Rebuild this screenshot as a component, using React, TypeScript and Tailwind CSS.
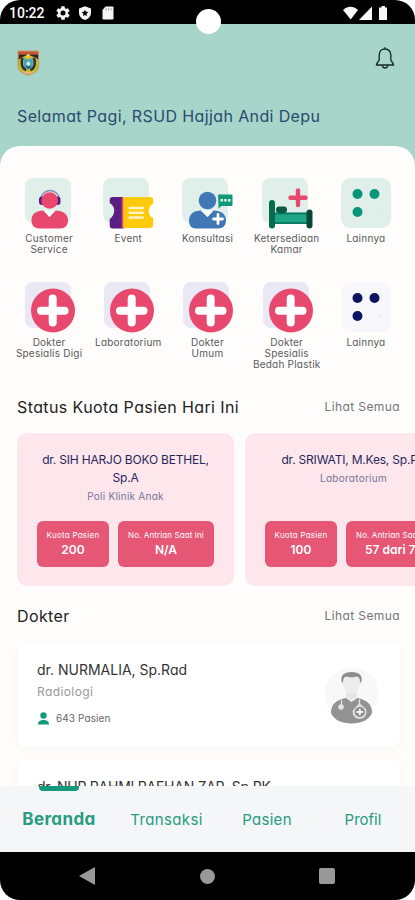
import React from 'react';

interface MenuItem {
    label: string[];
    icon: React.ReactNode;
}

interface Quota {
    name: string[];
    clinic: string;
    quota: string;
    queue: string;
}

const CustomerIcon = () => (
    <svg width="50" height="50" viewBox="0 0 50 50">
        <rect x="1" y="0" width="46" height="45" rx="8" fill="#e1efeb" />
        <path d="M16.500 22a9.500 9.500 0 0 1 19 0" fill="none" stroke="#8a86b5" strokeWidth="1.300" />
        <rect x="15" y="18.500" width="6" height="8.500" rx="3" fill="#5b1f83" />
        <rect x="30.500" y="18.500" width="6" height="8.500" rx="3" fill="#5b1f83" />
        <circle cx="25.700" cy="22.500" r="8.300" fill="#e8486d" />
        <path d="M7.500 42.500C7.500 36 12 32.500 19.500 32.500L25.500 39 31.500 32.500C39 32.500 44 36 44 42.500C44 47.500 41 50.500 36 50.500H15.500C10.500 50.500 7.500 47.500 7.500 42.500Z" fill="#e8486d" />
        <path d="M19.500 32.500h12L25.500 39z" fill="#fdfefe" />
    </svg>
);

const EventIcon = () => (
    <svg width="50" height="50" viewBox="0 0 50 50">
        <rect x="0" y="0" width="46" height="45" rx="8" fill="#e1efeb" />
        <g transform="translate(.7 0)">
            <path d="M20 19h-11c-2 0-3 1-3 3v3c3 1.500 4.500 4.500 4.500 7.500S9 39 6 41v6.500c0 2 1 3 3 3h11z" fill="#5b1f83" />
            <path d="M19 19h27c2 0 3.500 1 3.500 3v4c-3 1-4.500 4-4.500 7s1.500 6 4.500 7v7c0 2-1.500 3-3.500 3H19z" fill="#fecb0c" />
            <path d="M18 20l1.500-1V50.500L18 49z" fill="#e8486d" />
            <path d="M25 30h15M25 34.700h15M25 39.500h15" stroke="#fff3c4" strokeWidth="2.400" />
        </g>
    </svg>
);

const ConsultIcon = () => (
    <svg width="50" height="50" viewBox="0 0 50 50">
        <rect x="0" y="0" width="46" height="45" rx="8" fill="#e1efeb" />
        <circle cx="25.500" cy="22.500" r="8.800" fill="#3f78b5" />
        <path d="M7 43c0-6.500 4.500-10.500 12-10.500L25.500 39 31.500 32.500C39 32.500 44 36 44 42.500c0 5-3 8-8 8H14c-4.500 0-7-3-7-7.500z" fill="#3f78b5" />
        <path d="M19 32.500h12.500L25.500 39z" fill="#f5fbfb" />
        <path d="M36 16.500h13.500q1 0 1 1V27q0 1-1 1H39.500L36.500 30.500V28z" fill="#10987a" />
        <path d="M38.500 22.300h2.500M42.200 22.300h2.500M46 22.300h2.500" stroke="#e7f7f2" strokeWidth="2.400" />
        <path d="M36 36.500v9M31.500 41h9" stroke="#fff" strokeWidth="2.800" strokeLinecap="round" />
    </svg>
);

const BedIcon = () => (
    <svg width="50" height="50" viewBox="0 0 50 50">
        <rect x="0" y="0" width="46" height="45" rx="8" fill="#e1efeb" />
        <path d="M36 12.500v14.500M28.500 19.700h15" stroke="#e8486d" strokeWidth="4.400" strokeLinecap="round" />
        <rect x="12" y="34.500" width="33" height="11.500" fill="#1ca586" />
        <path d="M12 35.500h33M12 45h33" stroke="#087258" strokeWidth="1.500" />
        <rect x="14" y="28.500" width="11" height="6.500" rx="3" fill="#0a5b47" />
        <rect x="7" y="22" width="6" height="28.500" rx="3" fill="#086b50" />
        <rect x="44.500" y="31.500" width="6" height="19" rx="3" fill="#084837" />
    </svg>
);

const MoreIcon = ({ bg, dot }: { bg: string; dot: string }) => (
    <svg width="50" height="50" viewBox="0 0 50 50">
        <rect width="50" height="50" rx="9" fill={bg} />
        <circle cx="16.500" cy="16" r="5" fill={dot} />
        <circle cx="33.500" cy="16" r="5" fill={dot} />
        <circle cx="16.500" cy="34" r="5" fill={dot} />
        <path d="M28.500 34h1M38.500 32.500v3" stroke="#d7e2df" strokeWidth="0.800" />
    </svg>
);

const ClinicIcon = () => (
    <svg width="50" height="50" viewBox="0 0 50 50">
        <rect x="1" y="0" width="46" height="46" rx="8" fill="#eae8f5" />
        <circle cx="29" cy="28.500" r="22" fill="#e8486d" />
        <path d="M28.700 16.500v24M17 28.700h23.500" stroke="#fff" strokeWidth="8" strokeLinecap="round" />
    </svg>
);

const Crest = () => (
    <svg width="23" height="26" viewBox="0 0 24 27">
        <path d="M1 1h21.500v16c0 5-5 7.500-10.700 9.500C6 24.500 1 22 1 17z" fill="#c9b82f" stroke="#b98a68" strokeWidth="0.800" />
        <path d="M1.500 1.500h20.500v3H1.500z" fill="#c9503f" />
        <path d="M1.800 4.500H22v5L18 7H6l-4.200 3z" fill="#33202a" />
        <circle cx="11.700" cy="13.500" r="8" fill="#cdb935" />
        <path d="M6 8c-2.500 5-1 11 3.500 13M17.500 8c2.500 5 1 11-3.500 13" fill="none" stroke="#26353c" strokeWidth="2.600" />
        <path d="M7 8.500l3.500 1.200h2.500l3.500-1.200v8l-4.700 4-4.800-4z" fill="#4ba3bd" />
        <path d="M9.500 14.500l2.500-3 2 3-2 2.500z" fill="#dceaf0" />
        <path d="M8 17h7.500l-3.500 3z" fill="#285d89" />
        <circle cx="11.700" cy="5.800" r="1.800" fill="#f1d84c" />
        <path d="M5 21.500c4 2 9 2 13.500 0l-2 2.500c-3 1-6.500 1-9.500 0z" fill="#edb08c" />
    </svg>
);

const Avatar = () => (
    <svg width="56" height="58" viewBox="0 0 56 58">
        <circle cx="27.500" cy="28" r="27" fill="#f8f8f8" />
        <path d="M22 26h11v9l-5.500 6-5.500-6z" fill="#e3e3e3" />
        <path d="M7 47c0-9 5-13 15-15l5.500 3.500L33 32c10 2 15 6 15 15-3 7-11 10.500-20.500 10.500S10 54 7 47z" fill="#929292" />
        <path d="M23 31.500l4.500 3.500 5-3.500" fill="none" stroke="#f7f7f7" strokeWidth="1.500" />
        <path d="M18.300 18c-3-8 1-12 9.200-12s12.200 4 9.200 12z" fill="#8d8d8d" />
        <path d="M19 16c0-3 1-5 3-5.500 3 1 8 1 11 0 2 .5 3 2.500 3 5.500 1.500 0 1.500 3-.5 4-1 5-4.500 8.500-8 8.500S20.500 25 19.500 20c-2-1-2-4-.5-4z" fill="#ececec" />
        <path d="M17.500 34v5" stroke="#e8e8e8" strokeWidth="1.200" />
        <circle cx="17" cy="41" r="2.800" fill="#e4e4e4" />
        <path d="M35.500 33.500v6.500" stroke="#e8e8e8" strokeWidth="1.300" />
        <path d="M35.500 37l6.500 6c2 6-2 10-6.500 10s-8-4-6.500-9z" fill="#dedede" />
        <circle cx="35.800" cy="46" r="5" fill="#8b8b8b" />
        <path d="M35.800 42.700v6.600M32.500 46h6.600" stroke="#f3f3f3" strokeWidth="2" />
    </svg>
);

const services: MenuItem[] = [
    { label: ['Customer', 'Service'], icon: <CustomerIcon /> },
    { label: ['Event'], icon: <EventIcon /> },
    { label: ['Konsultasi'], icon: <ConsultIcon /> },
    { label: ['Ketersediaan', 'Kamar'], icon: <BedIcon /> },
    { label: ['Lainnya'], icon: <MoreIcon bg="#e1efeb" dot="#07967a" /> },
];

const clinics: MenuItem[] = [
    { label: ['Dokter', 'Spesialis Digi'], icon: <ClinicIcon /> },
    { label: ['Laboratorium'], icon: <ClinicIcon /> },
    { label: ['Dokter', 'Umum'], icon: <ClinicIcon /> },
    { label: ['Dokter', 'Spesialis', 'Bedah Plastik'], icon: <ClinicIcon /> },
    { label: ['Lainnya'], icon: <MoreIcon bg="#f8f7fc" dot="#0c1560" /> },
];

const quotas: Quota[] = [
    { name: ['dr. SIH HARJO BOKO BETHEL,', 'Sp.A'], clinic: 'Poli Klinik Anak', quota: '200', queue: 'N/A' },
    { name: ['dr. SRIWATI, M.Kes, Sp.PK'], clinic: 'Laboratorium', quota: '100', queue: '57 dari 75' },
];

const MenuRow = ({ items }: { items: MenuItem[] }) => (
    <div className="grid shrink-0 grid-cols-5 px-[9.5px]">
        {items.map((item, i) => (
            <div key={i} className="flex flex-col items-center">
                <div className="h-[50px] w-[50px] [&>svg]:overflow-visible">{item.icon}</div>
                <div className="mt-[5px] text-center text-[10px] leading-[11px] tracking-[0.22px] whitespace-nowrap text-[#5a5a5a]">
                    {item.label.map((line) => <div key={line}>{line}</div>)}
                </div>
            </div>
        ))}
    </div>
);

const SectionTitle = ({ title }: { title: string }) => (
    <div className="flex h-6 items-center justify-between pr-[15px] pl-[17px]">
        <h2 className="text-base tracking-[0.4px] text-[#222]">{title}</h2>
        <span className="text-xs tracking-[0.4px] text-[#757575]">Lihat Semua</span>
    </div>
);

const QuotaCard = ({ data }: { data: Quota }) => (
    <div className="flex h-[153px] w-[217px] shrink-0 flex-col rounded-[10px] bg-[#fde6ec] px-5 pt-[18px] pb-[19px] text-center whitespace-nowrap">
        <div className="text-[12px] leading-[18px] tracking-[-0.2px] text-[#27265c]">
            {data.name.map((line) => <div key={line}>{line}</div>)}
        </div>
        <div className="text-[10px] leading-[19px] tracking-[0.25px] text-[#77759a]">{data.clinic}</div>
        <div className="mt-auto flex h-[46px] gap-[9px] text-white">
            <div className="flex w-[72px] flex-col items-center rounded-md bg-[#e65675] pt-[8px]">
                <span className="text-[8px] leading-[12px] tracking-[0.25px]">Kuota Pasien</span>
                <span className="text-[12px] leading-[18px] font-semibold">{data.quota}</span>
            </div>
            <div className="flex w-24 flex-col items-center rounded-md bg-[#e65675] pt-[8px]">
                <span className="text-[8px] leading-[12px] tracking-[0.1px]">No. Antrian Saat Ini</span>
                <span className="text-[12px] leading-[18px] font-semibold">{data.queue}</span>
            </div>
        </div>
    </div>
);

const StatusBar = () => (
    <div className="relative flex h-6 shrink-0 items-center bg-black pt-[2px] pr-[27px] pl-[9px] text-white">
        <span className="w-[47px] font-[Roboto,sans-serif] text-[14px] font-medium">10:22</span>
        <svg width="14" height="14" viewBox="2 2 20 20" fill="#f4f4f4">
            <path d="M19.140 12.940c.04-.3.060-.610.060-.940s-.020-.640-.070-.940l2.030-1.580c.180-.140.230-.410.120-.610l-1.920-3.320c-.120-.220-.370-.290-.590-.220l-2.390.960c-.5-.380-1.030-.7-1.620-.940L14.400 2.810A.49.49 0 0 0 13.920 2.400h-3.840c-.240 0-.430.170-.470.410L9.250 5.350c-.590.240-1.130.570-1.620.940l-2.390-.960c-.220-.080-.470 0-.590.220L2.740 8.870c-.120.210-.080.470.120.610l2.030 1.580c-.050.3-.090.630-.090.940s.020.640.070.940l-2.030 1.580c-.180.140-.230.410-.120.610l1.920 3.320c.120.220.370.290.590.220l2.390-.960c.5.380 1.030.7 1.620.940l.360 2.540c.050.240.240.410.480.410h3.840c.240 0 .440-.170.470-.410l.360-2.540c.590-.240 1.130-.560 1.620-.940l2.390.960c.220.080.470 0 .590-.220l1.920-3.320c.120-.220.070-.470-.120-.610zM12 15.600A3.600 3.600 0 1 1 12 8.400a3.600 3.600 0 0 1 0 7.200z" />
        </svg>
        <svg className="ml-2" width="14" height="14" viewBox="0 0 14 14">
            <path d="M7 .2l6 2.300v4.200c0 3.500-2.500 6.200-6 7.200-3.500-1-6-3.700-6-7.200V2.500z" fill="#f4f4f4" />
            <path d="M7 3.700l1 2.100 2.300.3-1.700 1.600.4 2.300-2-1.100L5 10l.4-2.300-1.700-1.600 2.300-.3z" fill="#000" />
        </svg>
        <svg className="ml-[9px]" width="13" height="14" viewBox="0 0 13 14">
            <path d="M4.500.5h7q1 0 1 1v11q0 1-1 1h-9q-1 0-1-1V4z" fill="#f4f4f4" />
            <path d="M5 2v2.500M7.500 2v2.500M10 2v2.500" stroke="#999" strokeWidth="0.800" />
        </svg>
        <svg className="ml-auto" width="45" height="15" viewBox="0 0 45 15" fill="#f8f8f8">
            <path d="M0 4C5-.2 10-.2 15 4L7.700 13.500z" />
            <path d="M29 .5V14H16z" />
            <path d="M37 1.500h1.500V0H42v1.500h2V14h-8V1.500z" />
        </svg>
        <div className="absolute top-[9px] left-[196px] h-[25px] w-[25px] rounded-full bg-white" />
    </div>
);

const App = () => (
    <div className="flex h-[900px] w-[415px] flex-col overflow-hidden rounded-[20px] bg-[#fefdfc] font-[Inter,sans-serif] [font-feature-settings:'cv11']">
        <StatusBar />

        <header className="h-[142px] shrink-0 bg-[#a8d5c9]">
            <div className="flex justify-between pt-[22px] pr-5 pl-[17px]">
                <div className="pt-1"><Crest /></div>
                <svg width="20" height="25" viewBox="0 0 20 25" fill="none" stroke="#152d2b" strokeWidth="1.400">
                    <path d="M10 3c-3.800 0-5.800 2.800-5.800 6v4.500c0 2-2.700 3-2.700 5.500h17c0-2.500-2.700-3.500-2.700-5.500V9c0-3.200-2-6-5.800-6zM10 1.300v1.700M7.300 19.500c.2 3.300 5.200 3.300 5.400 0" />
                </svg>
            </div>
            <p className="mt-[28px] pl-[17px] text-base leading-6 tracking-[0.38px] whitespace-nowrap text-[#284a70]">Selamat Pagi, RSUD Hajjah Andi Depu</p>
        </header>

        <main className="relative -mt-5 flex min-h-0 flex-1 flex-col overflow-hidden rounded-t-[20px] bg-[#fefdfc] pt-8">
            <div className="flex h-[217px] shrink-0 flex-col gap-[27px]">
                <MenuRow items={services} />
                <MenuRow items={clinics} />
            </div>
            <div className="shrink-0"><SectionTitle title="Status Kuota Pasien Hari Ini" /></div>
            <div className="mt-[14px] flex shrink-0 gap-[11px] overflow-hidden pl-[17px]">
                {quotas.map((q) => <QuotaCard key={q.quota} data={q} />)}
            </div>
            <div className="mt-[18px] shrink-0"><SectionTitle title="Dokter" /></div>
            <div className="mt-[15px] flex shrink-0 flex-col gap-[13px] pr-[15px] pl-[17px]">
                <div className="flex h-[104px] items-center justify-between rounded-lg bg-white px-5 shadow-[0_2px_10px_rgba(0,0,0,0.03)]">
                    <div className="pb-1">
                        <div className="text-[14px] leading-5 text-[#333]">dr. NURMALIA, Sp.Rad</div>
                        <div className="mt-[2px] text-[12px] leading-5 tracking-[0.4px] text-[#999]">Radiologi</div>
                        <div className="mt-[8px] flex items-center gap-[6px] text-[10px] leading-4 tracking-[0.1px] text-[#666]">
                            <svg width="13" height="13" viewBox="0 0 13 13" fill="#149a7b">
                                <circle cx="6.500" cy="3.500" r="3.200" />
                                <path d="M1 12.500c0-3.500 2.500-4.500 5.500-4.500s5.500 1 5.500 4.500z" />
                            </svg>
                            <span>643 Pasien</span>
                        </div>
                    </div>
                    <Avatar />
                </div>
                <div className="h-[104px] rounded-lg bg-white px-5 pt-[17px] shadow-[0_2px_10px_rgba(0,0,0,0.03)]">
                    <div className="text-[14px] leading-5 tracking-[-0.25px] whitespace-nowrap text-[#333]">dr. NUR RAHMI RAEHAN ZAR, Sp.PK</div>
                </div>
            </div>
        </main>

        <nav className="relative grid h-[66px] shrink-0 grid-cols-[118px_97px_104px_88px] items-center bg-[#f4f6f8] pt-[2px] text-center text-[#289b80]">
            <div className="absolute top-0 left-[39px] h-[5px] w-10 rounded-b bg-[#149a7b]" />
            <span className="text-[17px] font-bold tracking-[0.4px]">Beranda</span>
            <span className="text-[15px] tracking-[0.35px]">Transaksi</span>
            <span className="text-[15px] tracking-[0.3px]">Pasien</span>
            <span className="text-[15px]">Profil</span>
        </nav>

        <footer className="flex h-12 shrink-0 items-center justify-between bg-black pr-[80px] pl-[79px]">
            <svg width="16" height="18" viewBox="0 0 16 18" fill="#999"><path d="M0 9L16 0V18z" /></svg>
            <div className="h-[15px] w-[15px] rounded-full bg-[#999]" />
            <div className="h-4 w-4 rounded-[2px] bg-[#999]" />
        </footer>
    </div>
);

export default App;
